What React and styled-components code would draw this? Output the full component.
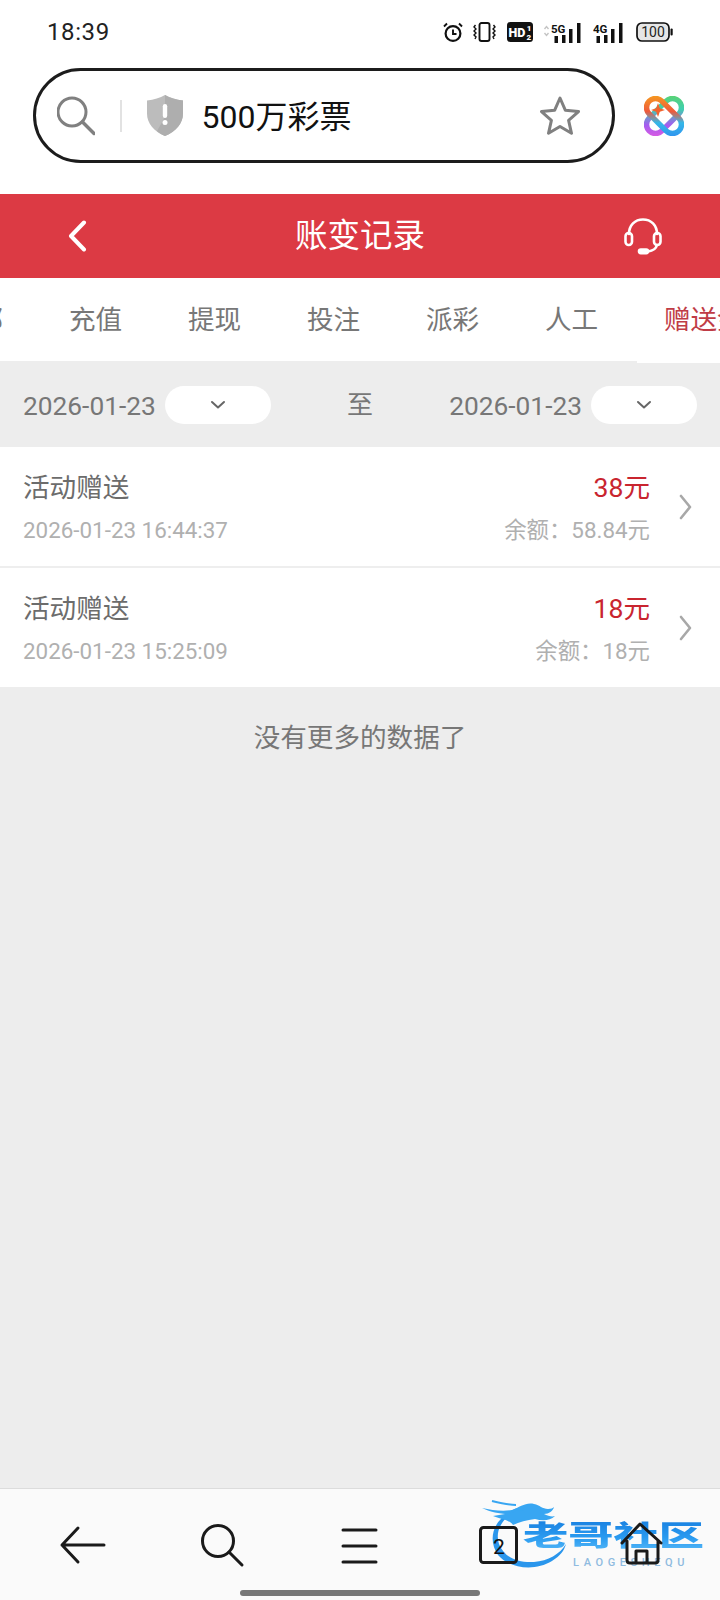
import React from "react";
import styled, { createGlobalStyle } from "styled-components";

const Global = createGlobalStyle`
  html, body { margin: 0; padding: 0; width: 720px; height: 1600px; overflow: hidden; background: #ededed; }
  * { box-sizing: border-box; }
  body { font-family: Roboto, "Noto Sans CJK SC", sans-serif; }
`;

const Page = styled.div`
  width: 720px; height: 1600px; display: flex; flex-direction: column; background: #ededed; overflow: hidden;
`;
const StatusBar = styled.div`
  height: 68px; background: #fff; display: flex; align-items: center; justify-content: space-between;
  padding: 0 47px 4px 47px; flex: none;
`;
const Time = styled.span`
  font-size: 24px; color: #222; letter-spacing: 0.6px; line-height: 1;
`;
const StatusIcons = styled.div`
  display: flex; align-items: center;
  svg { display: block; }
`;
const StatusSlot = styled.span`
  display: flex; margin-left: ${p => p.$gap}px;
`;
const AddressRow = styled.div`
  height: 126px; flex: none; background: #fff; display: flex; align-items: flex-start; padding-left: 33px;
`;
const Pill = styled.div`
  width: 582px; height: 95px; border: 3.5px solid #1c1c1c; border-radius: 48px; display: flex; align-items: center;
  padding: 0 32px 0 21px;
`;
const VSep = styled.span`
  width: 1.5px; height: 32px; background: #e2e2e2; margin: 0 25px 0 25px; flex: none;
`;
const Url = styled.span`
  flex: 1; margin: 2px 0 0 19px; font-size: 32px; color: #111; line-height: 1;
`;
const AppLogo = styled.span`
  display: flex; margin: 28px 0 0 29px;
`;
const Header = styled.div`
  height: 84px; flex: none; background: #dc3a44; display: grid; grid-template-columns: 1fr auto 1fr; align-items: center;
`;
const BackCell = styled.div`
  display: flex; padding-left: 68px;
`;
const Title = styled.div`
  color: #fff; font-size: 32.5px; line-height: 1;
`;
const HelpCell = styled.div`
  display: flex; justify-content: flex-end; padding: 0 58px 0 0;
`;
const TabBar = styled.div`
  height: 83px; flex: none; background: #fff; overflow: hidden; position: relative;
`;
const TabTrack = styled.div`
  display: flex; gap: 65.8px; margin-left: -50px; height: 100%; align-items: center; white-space: nowrap; padding-top: 2px;
`;
const Tab = styled.span`
  font-size: 26.6px; line-height: 1; flex: none; color: ${p => (p.$active ? "#bf3c46" : "#777")};
`;
const FilterBar = styled.div`
  height: 86px; flex: none; display: flex; align-items: center; justify-content: space-between; padding: 2px 23px 0; background: #ededed;
  position: relative;
  &::before { content: ""; position: absolute; top: 0; right: 0; width: 83px; height: 2px; background: #fff; }
`;
const DateGroup = styled.div`
  display: flex; align-items: center; gap: 9px;
`;
const DateText = styled.span`
  font-size: 26.3px; color: #777; line-height: 1; margin-top: 2px;
`;
const DatePick = styled.span`
  width: 106px; height: 38px; border-radius: 19px; background: #fff; display: flex; align-items: center; justify-content: center;
`;
const To = styled.span`
  font-size: 26px; color: #777; line-height: 1;
`;
const List = styled.div`
  display: flex; flex-direction: column; gap: 2px; background: #eeeeee; flex: none;
`;
const Row = styled.div`
  height: 119px; background: #fff; display: flex; align-items: center; padding: 5px 28px 0 23px;
`;
const RowMain = styled.div`
  flex: 1; display: flex; flex-direction: column; gap: 6px;
`;
const RowSide = styled(RowMain)`
  flex: none; align-items: flex-end;
`;
const RowTitle = styled.span`
  font-size: 26.6px; line-height: 36px; color: #6c6c6c;
`;
const Amount = styled.span`
  font-size: 26.6px; line-height: 36px; color: #c9252f;
`;
const Meta = styled.span`
  font-size: 22.4px; line-height: 36px; color: #b0b0b0;
`;
const Chevron = styled.span`
  display: flex; margin: -5px 0 0 29px;
`;
const NoMore = styled.div`
  padding-top: 31px; flex: 1; text-align: center; font-size: 26.6px; line-height: 40px; color: #777;
`;
const BottomNav = styled.div`
  height: 112px; flex: none; background: #fafafa; border-top: 1.5px solid #dcdcdc; position: relative;
  display: flex; gap: 92px; padding: 32px 0 0 58px;
`;
const NavIcon = styled.span`
  width: 48px; height: 48px; display: block; position: relative; z-index: 1;
  svg { display: block; overflow: visible; }
`;
const GestureBar = styled.span`
  position: absolute; left: 240px; bottom: 4px; width: 240px; height: 6px; border-radius: 3px; background: #777;
`;
const Watermark = styled.div`
  position: absolute; left: 480px; top: 6px; width: 230px; height: 85px;
  svg { position: absolute; left: 0; top: 0; }
`;
const WatermarkName = styled.span`
  position: absolute; left: 43px; top: 17px; font-size: 31px; line-height: 44px; font-weight: 900; white-space: nowrap;
  font-family: "Noto Sans CJK SC", sans-serif;
  background: linear-gradient(180deg, #1478dc 0%, #2a9bf0 60%, #5cbcf8 100%);
  -webkit-background-clip: text; background-clip: text; color: transparent;
  transform: scale(1.46, 0.9); transform-origin: left center;
`;
const WatermarkSub = styled.span`
  position: absolute; left: 93px; top: 61px; font-size: 11px; line-height: 14px; letter-spacing: 4.6px; color: #8fbbe0; white-space: nowrap; font-weight: 500;
`;

const Ink = "#111";

const Alarm = () => (
  <svg width="20" height="20" viewBox="0 0 20 20" fill="none" stroke={Ink}>
    <circle cx="10" cy="11.5" r="7.4" strokeWidth="2.2" />
    <path d="M10 7.5v4.5h3.5" strokeWidth="1.9" />
    <path d="M1 4.5L4 1.5M19 4.5L16 1.5" strokeWidth="1.9" />
  </svg>
);
const Vibrate = () => (
  <svg width="23" height="20" viewBox="0 0 23 20" fill="none" stroke={Ink}>
    <rect x="6.5" y="1" width="10" height="18" rx="2" strokeWidth="1.9" />
    <path d="M2.5 3l-1.5 2 2 2-2 2 2 2-2 2 2 2-1 2M20.5 3l1.5 2-2 2 2 2-2 2 2 2-2 2 1 2" strokeWidth="1.4" />
  </svg>
);
const Hd = () => (
  <svg width="26" height="20" viewBox="0 0 26 20">
    <rect width="26" height="20" rx="3.5" fill={Ink} />
    <text x="1.5" y="15" fontFamily="Roboto, sans-serif" fontWeight="900" fontSize="12.5" fill="#fff">HD</text>
    <text x="19.8" y="8.5" fontFamily="Roboto, sans-serif" fontWeight="900" fontSize="8" fill="#fff">1</text>
    <text x="19.6" y="17.5" fontFamily="Roboto, sans-serif" fontWeight="900" fontSize="8" fill="#fff">2</text>
  </svg>
);
const Signal = ({ label, arrows }) => (
  <svg width={arrows ? 38 : 30} height="21" viewBox={`${arrows ? -8 : 0} 0 ${arrows ? 38 : 30} 21`}>
    {arrows && <path d="M-6.5 7l2-2.5 2 2.500M-6.500 11l2 2.500 2-2.500" stroke="#c4c4c4" strokeWidth="1.400" fill="none" />}
    <text x="0" y="10.500" fontFamily="Roboto, sans-serif" fontWeight="700" fontSize="11.500" fill={Ink}>{label}</text>
    <rect x="3.500" y="14" width="3.500" height="7" fill={Ink} />
    <rect x="11" y="13" width="3.500" height="8" fill={Ink} />
    <rect x="18" y="7" width="3.500" height="14" fill={Ink} />
    <rect x="26" y="1" width="3.500" height="20" fill={Ink} />
  </svg>
);
const Battery = () => (
  <svg width="37" height="20" viewBox="0 0 37 20">
    <rect x="1" y="1" width="32" height="18" rx="5" fill="#e6e6e6" stroke={Ink} strokeWidth="1.700" />
    <rect x="34.500" y="6.500" width="2.200" height="7" rx="1" fill={Ink} />
    <text x="17" y="15" textAnchor="middle" fontFamily="Roboto, sans-serif" fontSize="14" fill="#222">100</text>
  </svg>
);
const SearchGlass = () => (
  <svg width="38" height="40" viewBox="0 0 38 40" fill="none" stroke="#808080" strokeWidth="3" strokeLinecap="round">
    <circle cx="15" cy="16" r="14" />
    <path d="M25.500 26l11.500 11.500" strokeWidth="3.500" />
  </svg>
);
const Shield = () => (
  <svg width="36" height="41" viewBox="0 0 36 41">
    <path d="M18 0c5 3 11 4.500 18 5.500v13c0 10-7 18-18 22.500C7 36.500 0 28.500 0 18.500v-13C7 4.500 13 3 18 0z" fill="#bcbcbc" />
    <path d="M18 0c5 3 11 4.500 18 5.500v13c0 10-7 18-18 22.500-3-1.200-6-3-8-5l8-14z" fill="#aeaeae" />
    <rect x="15.800" y="9" width="4.400" height="14" rx="2.200" fill="#fff" />
    <circle cx="18" cy="27.500" r="2.500" fill="#fff" />
  </svg>
);
const Star = () => (
  <svg width="40" height="40" viewBox="0 0 40 40" fill="none" stroke="#808080" strokeWidth="3" strokeLinejoin="round">
    <path d="M20 2l5.400 12.300 13.100 1.300-9.900 8.700 2.900 13L20 30.500 8.500 37.300l2.900-13-9.900-8.700 13.100-1.300z" />
  </svg>
);
const Browser = () => (
  <svg width="40" height="40" viewBox="0 0 40 40" fill="none" strokeWidth="5.500">
    <defs>
      <linearGradient id="loopA" x1="4" y1="4" x2="36" y2="36" gradientUnits="userSpaceOnUse">
        <stop offset="0" stopColor="#f7a21c" />
        <stop offset="0.4" stopColor="#ee5a3c" />
        <stop offset="0.65" stopColor="#35b8e8" />
        <stop offset="1" stopColor="#2e8ff0" />
      </linearGradient>
      <linearGradient id="loopB" x1="36" y1="4" x2="4" y2="36" gradientUnits="userSpaceOnUse">
        <stop offset="0" stopColor="#5fd36a" />
        <stop offset="0.35" stopColor="#3fcfb0" />
        <stop offset="0.7" stopColor="#a45cf0" />
        <stop offset="1" stopColor="#e25ae0" />
      </linearGradient>
    </defs>
    <g transform="rotate(-45 20 20)">
      <rect x="-1" y="11" width="42" height="18" rx="9" stroke="url(#loopB)" />
    </g>
    <g transform="rotate(45 20 20)">
      <rect x="-1" y="11" width="42" height="18" rx="9" stroke="url(#loopA)" />
    </g>
    <path d="M14 7l1.800 5.200L21 14l-5.200 1.800L14 21l-1.800-5.200L7 14l5.200-1.800z" fill="#f2622e" stroke="none" />
  </svg>
);
const Back = () => (
  <svg width="20" height="32" viewBox="0 0 20 32" fill="none" stroke="#fff" strokeWidth="4" strokeLinecap="round" strokeLinejoin="round">
    <path d="M16 2.500L3 16l13 13.500" />
  </svg>
);
const Headset = () => (
  <svg width="38" height="37" viewBox="0 0 38 37" fill="none" stroke="#fff" strokeWidth="2.600" strokeLinecap="round">
    <path d="M5 16C5 7 11 1.500 19 1.500S33 7 33 16" />
    <rect x="1.500" y="15" width="6.500" height="12" rx="3.200" />
    <rect x="30" y="15" width="6.500" height="12" rx="3.200" />
    <path d="M33 27c-1 4-5 6-9 6.500" />
    <rect x="15" y="31.500" width="9" height="3.600" rx="1.800" fill="#fff" />
  </svg>
);
const Caret = () => (
  <svg width="16" height="10" viewBox="0 0 16 10" fill="none" stroke="#666" strokeWidth="2" strokeLinecap="round" strokeLinejoin="round">
    <path d="M2 2l6 5.500L14 2" />
  </svg>
);
const RowArrow = () => (
  <svg width="13" height="26" viewBox="0 0 13 26" fill="none" stroke="#a8a8a8" strokeWidth="2.600" strokeLinecap="round" strokeLinejoin="round">
    <path d="M2 2l9 11-9 11" />
  </svg>
);
const navStroke = { fill: "none", stroke: "#1a1a1a", strokeWidth: 3, strokeLinecap: "round", strokeLinejoin: "round" };
const NavBack = () => (
  <svg width="48" height="48" viewBox="0 0 48 48" {...navStroke}><path d="M4 24h42M20 7L4 24l16 17" /></svg>
);
const NavSearch = () => (
  <svg width="48" height="48" viewBox="0 0 48 48" {...navStroke}><circle cx="20" cy="20" r="15.500" /><path d="M31 31l13 13" /></svg>
);
const NavMenu = () => (
  <svg width="48" height="48" viewBox="0 0 48 48" {...navStroke}><path d="M5 9h33M5 25h33M5 41h33" /></svg>
);
const NavTabs = () => (
  <svg width="48" height="48" viewBox="0 0 48 48">
    <rect x="2.500" y="6.500" width="36" height="35" rx="3" {...navStroke} />
    <text x="21" y="33" textAnchor="middle" fontFamily="Roboto, sans-serif" fontSize="21" fill="#111">2</text>
  </svg>
);
const NavHome = () => (
  <svg width="48" height="48" viewBox="0 0 48 48" {...navStroke}><path d="M4 22L22 3l21 19M9 20v19c0 2 1 3 3 3h25c2 0 3-1 3-3V20M18 42V30h11v12" /></svg>
);
const Dragon = () => (
  <svg width="110" height="85" viewBox="0 0 110 85" fill="none">
    <path d="M30 18C12 26 8 46 18 60c11 13 36 17 54 6 8-5 12-10 14-17-6 10-18 17-32 18-17 1-30-5-35-18-4-12 2-24 14-31z" fill="#2a96ec" />
    <path d="M2 13c10 2 20 4 30 2 8-3 14-8 22-6 6 1 8 5 14 5 3 0 5-1 6-2-1 4-5 7-10 7 4 2 8 3 11 2-5 5-13 5-20 3-8 1-16 3-22 6-3-5-13-6-20-9l12-2C15 18 8 16 2 13z" fill="#38a6f2" />
    <path d="M12 6c8 2 16 4 24 4M30 18c5-4 10-5 14-3" stroke="#38a6f2" strokeWidth="2" />
  </svg>
);

const tabs = ["全部", "充值", "提现", "投注", "派彩", "人工"];
const records = [
  { time: "2026-01-23 16:44:37", amount: "38元", balance: "余额：58.84元" },
  { time: "2026-01-23 15:25:09", amount: "18元", balance: "余额：18元" },
];

export default function App() {
  return (
    <Page>
      <Global />
      <StatusBar>
        <Time>18:39</Time>
        <StatusIcons>
          <Alarm />
          <StatusSlot $gap={10}><Vibrate /></StatusSlot>
          <StatusSlot $gap={11}><Hd /></StatusSlot>
          <StatusSlot $gap={10}><Signal label="5G" arrows /></StatusSlot>
          <StatusSlot $gap={12}><Signal label="4G" /></StatusSlot>
          <StatusSlot $gap={13}><Battery /></StatusSlot>
        </StatusIcons>
      </StatusBar>
      <AddressRow>
        <Pill>
          <SearchGlass />
          <VSep />
          <Shield />
          <Url>500万彩票</Url>
          <Star />
        </Pill>
        <AppLogo><Browser /></AppLogo>
      </AddressRow>
      <Header>
        <BackCell><Back /></BackCell>
        <Title>账变记录</Title>
        <HelpCell><Headset /></HelpCell>
      </Header>
      <TabBar>
        <TabTrack>
          {tabs.map(t => <Tab key={t}>{t}</Tab>)}
          <Tab $active>赠送金</Tab>
        </TabTrack>
      </TabBar>
      <FilterBar>
        <DateGroup>
          <DateText>2026-01-23</DateText>
          <DatePick><Caret /></DatePick>
        </DateGroup>
        <To>至</To>
        <DateGroup>
          <DateText>2026-01-23</DateText>
          <DatePick><Caret /></DatePick>
        </DateGroup>
      </FilterBar>
      <List>
        {records.map(r => (
          <Row key={r.time}>
            <RowMain>
              <RowTitle>活动赠送</RowTitle>
              <Meta>{r.time}</Meta>
            </RowMain>
            <RowSide>
              <Amount>{r.amount}</Amount>
              <Meta>{r.balance}</Meta>
            </RowSide>
            <Chevron><RowArrow /></Chevron>
          </Row>
        ))}
      </List>
      <NoMore>没有更多的数据了</NoMore>
      <BottomNav>
        <Watermark>
          <Dragon />
          <WatermarkName>老哥社区</WatermarkName>
          <WatermarkSub>LAOGESHEQU</WatermarkSub>
        </Watermark>
        <NavIcon><NavBack /></NavIcon>
        <NavIcon><NavSearch /></NavIcon>
        <NavIcon><NavMenu /></NavIcon>
        <NavIcon><NavTabs /></NavIcon>
        <NavIcon><NavHome /></NavIcon>
        <GestureBar />
      </BottomNav>
    </Page>
  );
}
